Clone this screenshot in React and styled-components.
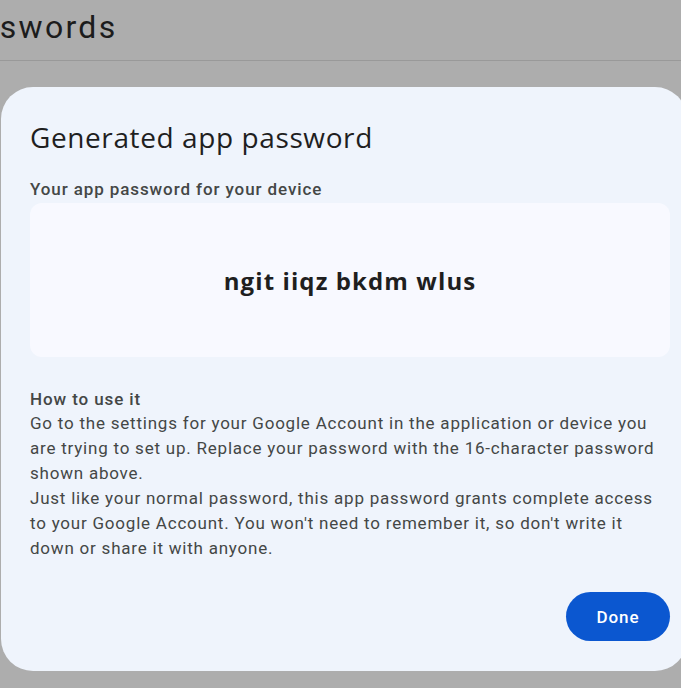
import React from 'react';
import styled, { createGlobalStyle } from 'styled-components';

const GlobalStyle = createGlobalStyle`
  html, body {
    margin: 0;
    padding: 0;
    background: #adadad;
    overflow: hidden;
  }
  body {
    font-family: Roboto, "Liberation Sans", sans-serif;
  }
`;

const Page = styled.div`
  width: 681px;
  height: 688px;
  overflow: hidden;
  background: #adadad;
`;

const Header = styled.div`
  height: 61px;
  border-bottom: 1px solid #999;
  box-sizing: border-box;
  overflow: hidden;
`;

const HeaderTitle = styled.h1`
  margin: 0;
  padding-top: 7px;
  font-family: Roboto, sans-serif;
  font-weight: 400;
  font-size: 32px;
  letter-spacing: 2.3px;
  line-height: 40px;
  color: #1c1c1c;
  white-space: nowrap;
  text-indent: -133px;
`;

const Dialog = styled.div`
  margin: 26px 0 0 1px;
  width: 686px;
  height: 584px;
  box-sizing: border-box;
  padding: 0 16px 0 29px;
  background: #eff4fc;
  border-radius: 32px;
  display: flex;
  flex-direction: column;
`;

const Title = styled.h2`
  margin: 0;
  padding-top: 30px;
  font-family: "Open Sans", Roboto, sans-serif;
  font-weight: 400;
  font-size: 28px;
  letter-spacing: 0.6px;
  line-height: 40px;
  color: #1f1f1f;
`;

const Label = styled.div`
  margin-top: ${p => p.$top || 0}px;
  font-size: 17px;
  font-weight: 500;
  letter-spacing: 0.9px;
  line-height: 24px;
  color: #444746;
`;

const PasswordBox = styled.div`
  margin-top: 2px;
  width: 640px;
  height: 154px;
  border-radius: 12px;
  background: #f8f9ff;
  display: flex;
  align-items: center;
  justify-content: center;
`;

const Password = styled.span`
  font-family: "Open Sans", Roboto, sans-serif;
  font-weight: 700;
  font-size: 24px;
  letter-spacing: 1.1px;
  color: #1f1f1f;
`;

const Body = styled.p`
  margin: 0;
  font-size: 17px;
  letter-spacing: 0.78px;
  line-height: 25px;
  color: #444746;
  width: 640px;
`;

const Actions = styled.div`
  margin-top: 31px;
  width: 640px;
  display: flex;
  justify-content: flex-end;
`;

const DoneButton = styled.button`
  width: 104px;
  height: 49px;
  border: none;
  border-radius: 25px;
  background: #0b57d0;
  color: #fff;
  font-family: Roboto, sans-serif;
  font-size: 17px;
  font-weight: 500;
  letter-spacing: 0.9px;
  cursor: pointer;
`;

export default function App() {
  return (
    <Page>
      <GlobalStyle />
      <Header>
        <HeaderTitle>App passwords</HeaderTitle>
      </Header>
      <Dialog>
        <Title>Generated app password</Title>
        <Label $top={20}>Your app password for your device</Label>
        <PasswordBox>
          <Password>ngit iiqz bkdm wlus</Password>
        </PasswordBox>
        <Label $top={30}>How to use it</Label>
        <Body>
          Go to the settings for your Google Account in the application or device you
          are trying to set up. Replace your password with the 16-character password
          shown above.
        </Body>
        <Body>
          Just like your normal password, this app password grants complete access
          to your Google Account. You won't need to remember it, so don't write it
          down or share it with anyone.
        </Body>
        <Actions>
          <DoneButton>Done</DoneButton>
        </Actions>
      </Dialog>
    </Page>
  );
}
